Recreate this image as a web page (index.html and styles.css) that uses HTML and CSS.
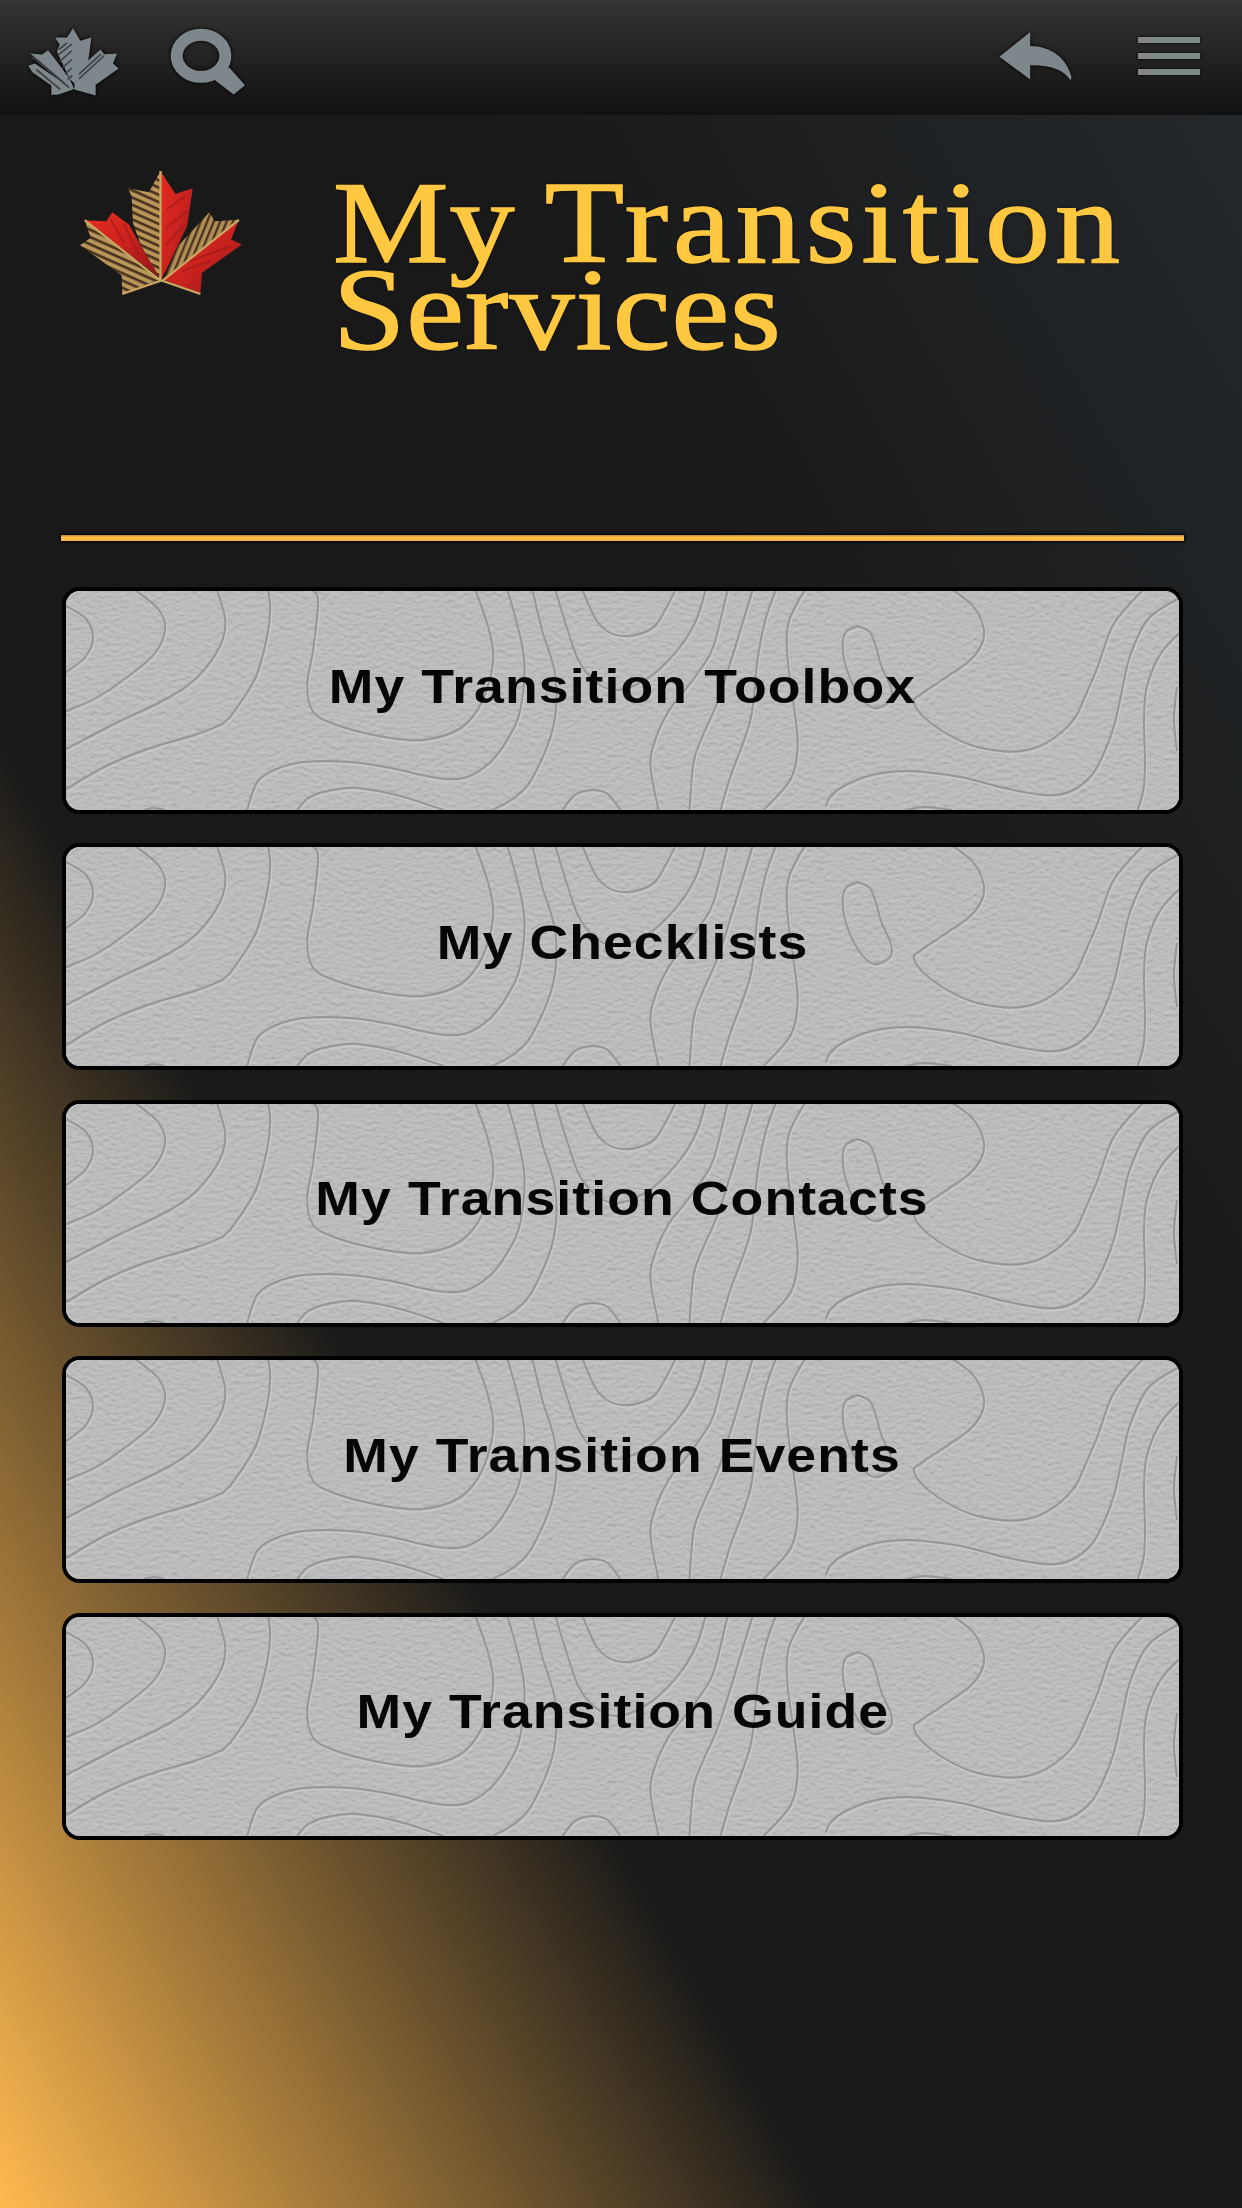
FILE: index.html
```html
<!DOCTYPE html>
<html lang="en">
<head>
    <meta charset="UTF-8">
    <meta name="viewport" content="width=device-width, initial-scale=1.0">
    <title>My Transition Services</title>
    <link rel="stylesheet" href="styles.css">
</head>
<body>

    <!-- Top bar -->
    <header class="topbar">
        <svg class="icon icon-leaf" viewBox="80 78 276 212">
            <path d="M218 84 L240 122 L273 112 L264 180 L222 250 L208 236 L170 155 L178 132 L164 112 L200 112 Z"/>
            <path d="M90 160 L125 163 L143 150 L165 178 L218 258 L200 254 Z"/>
            <path d="M84 197 L104 190 L218 268 L172 284 L153 284 L153 256 L96 216 Z"/>
            <path d="M222 250 L250 193 L300 148 L312 162 L350 160 L338 190 L355 205 L286 254 L286 286 L222 268 Z"/>
            <path d="M165 178 L208 236 L222 268 L200 262 Z"/>
            <path class="cut" d="M176 148 L200 128 M174 164 L214 132 M178 184 L214 152 M186 204 L214 178 M194 222 L214 204 M202 238 L216 226 M96 170 L206 262 M108 208 L180 268 M236 222 L302 162 M236 236 L312 166"/>
        </svg>
        <svg class="icon icon-search" viewBox="506 82 234 206">
            <ellipse class="ring" cx="602" cy="168" rx="73" ry="63"/>
            <path d="M642 240 L686 202 L734 256 L700 284 Z"/>
        </svg>
        <svg class="icon icon-back" viewBox="112 92 226 150">
            <path d="M116 169 L209 95 V137 C270 138 318 170 334 232 L330 240 C310 208 270 194 209 195 V238 Z"/>
        </svg>
        <div class="icon-menu"><span></span><span></span><span></span></div>
    </header>

    <!-- Title -->
    <section class="hero">
        <svg class="logo" viewBox="50 58 500 382">
            <defs>
                <linearGradient id="red" x1="0" y1="0" x2="1" y2="1">
                    <stop offset="0" stop-color="#e52b20"/>
                    <stop offset="0.5" stop-color="#cc231e"/>
                    <stop offset="1" stop-color="#8f1419"/>
                </linearGradient>
                <pattern id="ribs" width="20" height="20" patternUnits="userSpaceOnUse" patternTransform="rotate(24)">
                    <rect width="20" height="20" fill="#b89558"/>
                    <rect width="20" height="8" fill="#4a341f"/>
                </pattern>
                <pattern id="ribs-up" width="18" height="20" patternUnits="userSpaceOnUse" patternTransform="rotate(22)">
                    <rect width="18" height="20" fill="#b08e55"/>
                    <rect width="7" height="20" fill="#4a341f"/>
                </pattern>
            </defs>
            <path fill="url(#ribs)" d="M300 64 V395 L240 285 L217 220 L213 140 L202 116 L265 128 Z"/>
            <path fill="url(#red)" d="M300 64 L345 133 L397 116 L380 230 L325 345 L300 395 Z"/>
            <path fill="url(#red)" d="M72 212 L137 215 L155 188 L205 225 L242 290 L298 385 Z"/>
            <path fill="url(#ribs)" d="M72 212 L298 390 L185 434 L183 378 L58 287 L90 265 Z"/>
            <path fill="url(#ribs-up)" d="M312 385 L352 290 L447 188 L463 215 L536 211 Z"/>
            <path fill="url(#red)" d="M536 211 L512 270 L545 285 L425 370 L420 434 L310 390 Z"/>
            <path class="shade" d="M318 180 L375 140 M316 235 L380 185 M316 285 L368 230 M150 210 L190 280 M190 225 L235 315 M390 335 L510 290 M365 365 L450 335"/>
            <path class="vein" d="M300 64 V395 M72 212 L298 392 M536 211 L308 392 M185 434 L303 393 L420 434"/>
        </svg>
        <h1>My <span class="wide">Transition</span><br>Services</h1>
    </section>

    <div class="rule"></div>

    <nav class="menu" id="menu">
        <!-- Buttons are built by the script below -->
    </nav>

    <!-- Paper texture and contour map shared by the buttons -->
    <svg class="defs" width="0" height="0">
        <filter id="paper" x="0" y="0" width="100%" height="100%" color-interpolation-filters="sRGB">
            <feTurbulence type="fractalNoise" baseFrequency="0.16 0.26" numOctaves="2" seed="4" result="noise"/>
            <feDiffuseLighting in="noise" surfaceScale="0.7" diffuseConstant="0.87" lighting-color="#e0e0e0">
                <feDistantLight azimuth="270" elevation="75"/>
            </feDiffuseLighting>
        </filter>
        <symbol id="contours" viewBox="0 0 1112 219" preserveAspectRatio="none">
            <rect width="1112" height="219" fill="#bcbcbc" filter="url(#paper)"/>
            <path id="contour-light" class="contour-light" transform="translate(1.5 2.5)"/>
            <path id="contour-dark" class="contour-dark"/>
        </symbol>
    </svg>

    <script>
        const items = [
            'My Transition Toolbox',
            'My Checklists',
            'My Transition Contacts',
            'My Transition Events',
            'My Transition Guide'
        ];

        // Each line is a list of x,y points
        const lines = [
            [0,15, 20,28, 27,47, 19,66, 0,81],
            [69,-1, 92,18, 99,38, 88,63, 61,86, 30,107, 0,120],
            [151,-1, 159,28, 156,50, 141,75, 122,94, 94,111, 50,132, 0,158],
            [202,-1, 204,18, 201,45, 190,85, 171,116, 157,132, 131,143, 81,158, 40,175, 0,198],
            [247,-1, 252,11, 247,58, 241,95, 247,121, 265,132, 294,141, 325,147, 356,149, 387,141, 406,126, 420,100, 427,65, 421,33, 409,-1],
            [181,219, 191,191, 210,178, 237,171, 284,171, 325,177, 365,186, 397,187, 424,171, 443,145, 454,118, 458,71, 450,30, 441,-1],
            [231,219, 242,207, 261,200, 291,197, 334,205, 377,219],
            [466,-1, 476,40, 489,85, 487,135, 467,185, 449,206, 426,219],
            [489,-1, 501,38, 514,73, 535,95, 557,98, 587,83, 614,55, 630,28, 639,-1],
            [516,-1, 529,28, 542,41, 557,45, 573,43, 590,33, 609,-1],
            [661,-1, 647,55, 634,78, 617,101, 602,120, 589,148, 584,175, 592,219],
            [686,-1, 675,35, 664,71, 651,111, 636,145, 627,171, 623,219],
            [709,-1, 699,28, 691,68, 684,128, 664,185, 654,219],
            [738,-1, 722,31, 721,68, 728,120, 731,155, 724,188, 697,219],
            [496,219, 506,206, 514,201, 528,199, 541,203, 554,219],
            [791,35, 779,41, 776,55, 779,75, 788,97, 801,114, 811,117, 824,109, 824,96, 815,76, 809,55, 803,41, 791,35],
            [886,-1, 907,16, 917,38, 914,55, 901,71, 875,89, 853,104, 847,110, 855,124, 877,141, 904,154, 934,160, 960,159, 984,149, 1007,128, 1020,101, 1031,75, 1044,38, 1058,18, 1076,-1],
            [759,215, 764,205, 777,195, 805,184, 841,180, 894,186, 937,197, 977,204, 1002,201, 1024,185, 1037,162, 1047,135, 1055,100, 1063,65, 1081,28, 1112,7],
            [1112,42, 1097,58, 1087,75, 1079,100, 1077,130, 1078,165, 1077,195, 1071,219],
            [1110,96, 1107,128, 1110,160],
            [78,219, 88,217, 98,219],
            [840,219, 858,216, 885,219]
        ];

        // Turns the points into a smooth curve
        function smooth(p) {
            let d = `M${p[0]} ${p[1]}`;
            const n = p.length / 2;
            const at = i => {
                const k = Math.max(0, Math.min(n - 1, i));
                return [p[k * 2], p[k * 2 + 1]];
            };
            for (let i = 0; i < n - 1; i++) {
                const [a, b, c, e] = [at(i - 1), at(i), at(i + 1), at(i + 2)];
                d += `C${b[0] + (c[0] - a[0]) / 6} ${b[1] + (c[1] - a[1]) / 6} ${c[0] - (e[0] - b[0]) / 6} ${c[1] - (e[1] - b[1]) / 6} ${c[0]} ${c[1]}`;
            }
            return d;
        }

        const path = lines.map(smooth).join('');
        document.getElementById('contour-light').setAttribute('d', path);
        document.getElementById('contour-dark').setAttribute('d', path);

        const menu = document.getElementById('menu');
        items.forEach(item => {
            const button = document.createElement('button');
            button.className = 'menu-button';
            button.innerHTML = `
                <svg class="map"><use href="#contours"/></svg>
                <span>${item}</span>
            `;
            menu.appendChild(button);
        });
    </script>

</body>
</html>
```
FILE: styles.css
```css
* {
    box-sizing: border-box;
}

body {
    margin: 0;
    height: 2208px;
    overflow: hidden;
    font-family: "Liberation Sans", Arial, sans-serif;
    background: linear-gradient(to top right, #ffb950 0%, #191919 33.5%, #191919 66%, #24292d 100%);
}

/* Top bar */
.topbar {
    display: flex;
    align-items: flex-start;
    height: 115px;
    background: linear-gradient(#343434, #111111);
}

.icon {
    fill: #7d878c;
    filter: drop-shadow(0 0 2px #000);
}

.icon-leaf {
    width: 92px;
    height: 71px;
    margin: 26px 0 0 27px;
}

.icon-leaf .cut {
    fill: none;
    stroke: #3d4346;
    stroke-width: 5;
}

.icon-search {
    width: 78px;
    height: 69px;
    margin: 27px 0 0 50px;
}

.icon-search .ring {
    fill: none;
    stroke: #7d878c;
    stroke-width: 36;
}

.icon-back {
    width: 75px;
    height: 50px;
    margin: 31px 0 0 auto;
}

.icon-menu {
    display: flex;
    flex-direction: column;
    gap: 10px;
    width: 62px;
    margin: 37px 42px 0 65px;
}

.icon-menu span {
    height: 6px;
    background: #81888b;
    box-shadow: 0 0 3px #000;
}

/* Title */
.hero {
    display: flex;
    align-items: flex-start;
    height: 420px;
    padding: 54px 0 0 77px;
}

.logo {
    flex: none;
    width: 167px;
    height: 127px;
}

.logo .vein {
    fill: none;
    stroke: #c9a561;
    stroke-width: 7;
}

.logo .shade {
    fill: none;
    stroke: #8f1519;
    stroke-width: 6;
    opacity: 0.45;
}

h1 {
    margin: 10px 0 0 89px;
    font-family: Georgia, "Liberation Serif", serif;
    font-size: 117px;
    font-weight: normal;
    line-height: 87px;
    letter-spacing: 1px;
    white-space: nowrap;
    color: #ffc840;
    -webkit-text-stroke: 1.5px #ffc840;
    transform: scaleX(1.11);
    transform-origin: 0 0;
    text-shadow: 0 0 3px #000;
}

h1 .wide {
    margin-left: -4px;
    letter-spacing: 4.6px;
}

.rule {
    height: 6px;
    margin: 0 58px 1px 61px;
    background: linear-gradient(#b98530, #ffc04c 40%, #f3b143);
    box-shadow: 0 0 3px 1px #000;
}

/* Buttons */
.menu {
    display: flex;
    flex-direction: column;
    gap: 29.4px;
    margin: 46px 59px 0 62px;
}

.menu-button {
    position: relative;
    height: 227px;
    padding: 0 0 29px;
    overflow: hidden;
    border: 4px solid #000;
    border-radius: 18px;
    background: #bcbcbc;
    font-family: inherit;
    font-size: 48px;
    font-weight: bold;
    letter-spacing: 1px;
    color: #060606;
}

.menu-button span {
    display: inline-block;
    transform: scaleX(1.115);
}

/* Map lies behind the label */
.map {
    position: absolute;
    top: 0;
    left: 0;
    width: 100%;
    height: 100%;
}

.contour-dark {
    fill: none;
    stroke: #969696;
    stroke-width: 2;
}

.contour-light {
    fill: none;
    stroke: #c8c8c8;
    stroke-width: 1.5;
}
```
